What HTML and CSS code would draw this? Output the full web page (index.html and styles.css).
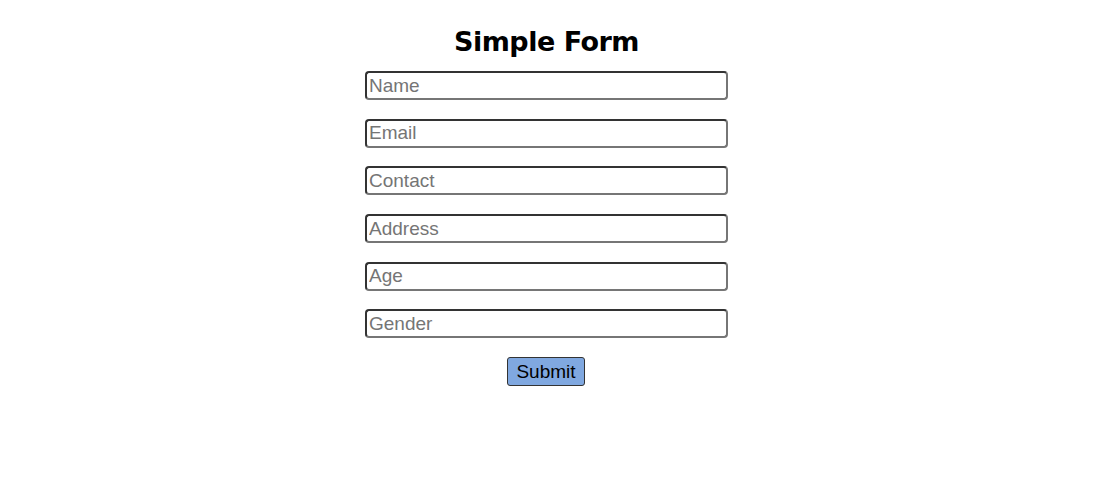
FILE: index.html
```html
<!DOCTYPE html>
<html>
<head>
<meta charset="utf-8">
<link rel="stylesheet" href="styles.css">
<title>Simple Form</title>
</head>
<body>
<div class="page">
  <h1 class="title">Simple Form</h1>
  <form class="form">
    <input class="field" type="text" placeholder="Name">
    <input class="field" type="email" placeholder="Email">
    <input class="field" type="text" placeholder="Contact">
    <input class="field" type="text" placeholder="Address">
    <input class="field" type="text" placeholder="Age">
    <input class="field" type="text" placeholder="Gender">
    <button class="submit" type="button">Submit</button>
  </form>
</div>
</body>
</html>
```
FILE: styles.css
```css
html, body {
  margin: 0;
  padding: 0;
  background: #fff;
}
.page {
  display: flex;
  flex-direction: column;
  align-items: center;
  padding: 23px 0 0 0;
}
.title {
  margin: 0 0 11px 0;
  font-family: "DejaVu Sans", sans-serif;
  font-weight: bold;
  font-size: 27px;
  line-height: 37px;
  color: #000;
  letter-spacing: -0.5px;
}
.form {
  display: flex;
  flex-direction: column;
  align-items: center;
  gap: 18.7px;
}
.field {
  box-sizing: border-box;
  width: 363px;
  height: 29px;
  margin: 0;
  padding: 1px 2px;
  border: 2px solid;
  border-color: #333 #767676 #767676 #333;
  border-radius: 4px;
  font-family: "Liberation Sans", Arial, sans-serif;
  font-size: 19px;
  color: #000;
  background: #fff;
  outline: none;
}
.field::placeholder {
  color: #757575;
}
.submit {
  box-sizing: border-box;
  width: 78px;
  height: 29px;
  margin: 0 1px 0 0;
  padding: 0 6px;
  border: 1px solid #333;
  border-radius: 3px;
  background: #80a8e0;
  font-family: "Liberation Sans", Arial, sans-serif;
  font-size: 19px;
  color: #000;
}
```
